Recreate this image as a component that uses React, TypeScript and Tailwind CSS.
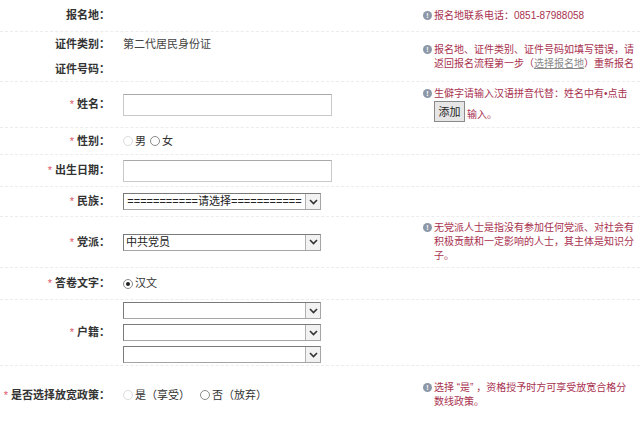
import React from 'react';

const TIP = 'text-[#a8324f]';

function Star() {
  return <span className="text-[#e0566a] font-normal mr-[3px]">*</span>;
}

function Label({ text, req = false }: { text: string; req?: boolean }) {
  return (
    <div className="w-[112px] shrink-0 pr-[2px] text-right text-[11px] font-bold text-[#333]">
      {req && <Star />}
      {text}：
    </div>
  );
}

function InfoIcon() {
  return (
    <span className="inline-flex items-center justify-center w-[9px] h-[9px] rounded-full bg-[#8c98a8] text-white text-[7px] font-bold leading-none mr-[2px] mt-[2px] shrink-0">
      !
    </span>
  );
}

function Tip({ children }: { children: React.ReactNode }) {
  return (
    <div className="flex items-start pl-[1px] w-[218px]">
      <InfoIcon />
      <div className={`w-[203px] text-[10px] leading-[14px] ${TIP}`}>{children}</div>
    </div>
  );
}

function Radio({ checked = false, faint = false }: { checked?: boolean; faint?: boolean }) {
  return (
    <span
      className={`inline-flex items-center justify-center w-[10px] h-[10px] rounded-full border bg-white mr-[2px] ${
        faint ? 'border-[#dcdcdc]' : 'border-[#8a8a8a]'
      }`}
    >
      {checked && <span className="w-[4px] h-[4px] rounded-full bg-[#222]" />}
    </span>
  );
}

function Select({ text = '', center = false }: { text?: string; center?: boolean }) {
  return (
    <div className="flex items-stretch w-[198px] h-[17px] border border-[#a5a5a5] border-t-[#7a7a7a] border-l-[#7a7a7a] bg-white">
      <div
        className={`flex-1 text-[11px] leading-[15px] text-[#222] px-[2px] overflow-hidden whitespace-nowrap ${
          center ? 'text-center' : ''
        }`}
      >
        {text}
      </div>
      <div className="w-[15px] flex items-center justify-center border-l border-[#b0b0b0] bg-[#f2f2f2]">
        <svg width="9" height="6" viewBox="0 0 9 6">
          <polyline points="1,1 4.5,4.5 8,1" fill="none" stroke="#333" strokeWidth="1.6" />
        </svg>
      </div>
    </div>
  );
}

function Input() {
  return <div className="w-[209px] h-[22px] border border-[#c9c9c9] border-t-[#a8a8a8] bg-white" />;
}

const row = 'flex items-center border-b border-dashed border-[#ececec]';

export default function App() {
  return (
    <div className="w-[640px] h-[424px] bg-white overflow-hidden font-['Liberation_Sans','Noto_Sans_CJK_SC',sans-serif]">
      <div className={`${row} h-[32px]`}>
        <Label text="报名地" />
        <div className="w-[310px]" />
        <Tip>报名地联系电话：0851-87988058</Tip>
      </div>

      <div className={`${row} h-[50px]`}>
        <div className="flex flex-col w-[422px] shrink-0">
          <div className="flex items-center h-[25px]">
            <Label text="证件类别" />
            <div className="pl-[11px] text-[11px] text-[#444]">第二代居民身份证</div>
          </div>
          <div className="flex items-center h-[25px]">
            <Label text="证件号码" />
          </div>
        </div>
        <Tip>
          报名地、证件类别、证件号码如填写错误，请返回报名流程第一步（
          <span className="text-[#8a8a8a] underline">选择报名地</span>）重新报名
        </Tip>
      </div>

      <div className={`${row} h-[46px]`}>
        <Label text="姓名" req />
        <div className="w-[310px] pl-[11px]">
          <Input />
        </div>
        <div className="flex items-start pl-[1px] w-[218px]">
          <InfoIcon />
          <div className={`w-[203px] text-[10px] leading-[14px] ${TIP}`}>
            <div>生僻字请输入汉语拼音代替：姓名中有•点击</div>
            <div className="flex items-end">
              <span className="inline-flex items-center justify-center w-[31px] h-[21px] border border-[#8a8a8a] bg-[#e6e6e6] text-[11px] text-[#222] mr-[2px]">
                添加
              </span>
              <span>输入。</span>
            </div>
          </div>
        </div>
      </div>

      <div className={`${row} h-[27px]`}>
        <Label text="性别" req />
        <div className="pl-[11px] flex items-center text-[11px] text-[#333]">
          <Radio faint />
          <span className="mr-[4px]">男</span>
          <Radio />
          <span>女</span>
        </div>
      </div>

      <div className={`${row} h-[32px]`}>
        <Label text="出生日期" req />
        <div className="pl-[11px]">
          <Input />
        </div>
      </div>

      <div className={`${row} h-[30px]`}>
        <Label text="民族" req />
        <div className="pl-[11px]">
          <Select text="===========请选择===========" center />
        </div>
      </div>

      <div className={`${row} h-[51px]`}>
        <Label text="党派" req />
        <div className="w-[310px] pl-[11px]">
          <Select text="中共党员" />
        </div>
        <Tip>无党派人士是指没有参加任何党派、对社会有积极贡献和一定影响的人士，其主体是知识分子。</Tip>
      </div>

      <div className={`${row} h-[32px]`}>
        <Label text="答卷文字" req />
        <div className="pl-[11px] flex items-center text-[11px] text-[#333]">
          <Radio checked />
          <span>汉文</span>
        </div>
      </div>

      <div className={`${row} h-[66px]`}>
        <Label text="户籍" req />
        <div className="pl-[11px] flex flex-col gap-[5px]">
          <Select />
          <Select />
          <Select />
        </div>
      </div>

      <div className="flex items-center h-[58px]">
        <Label text="是否选择放宽政策" req />
        <div className="w-[310px] pl-[11px] flex items-center text-[11px] text-[#333]">
          <Radio faint />
          <span className="mr-[10px]">是（享受）</span>
          <Radio />
          <span>否（放弃）</span>
        </div>
        <Tip>
          选择 “是” ，资格授予时方可享受放宽合格分
          <br />
          数线政策。
        </Tip>
      </div>
    </div>
  );
}
